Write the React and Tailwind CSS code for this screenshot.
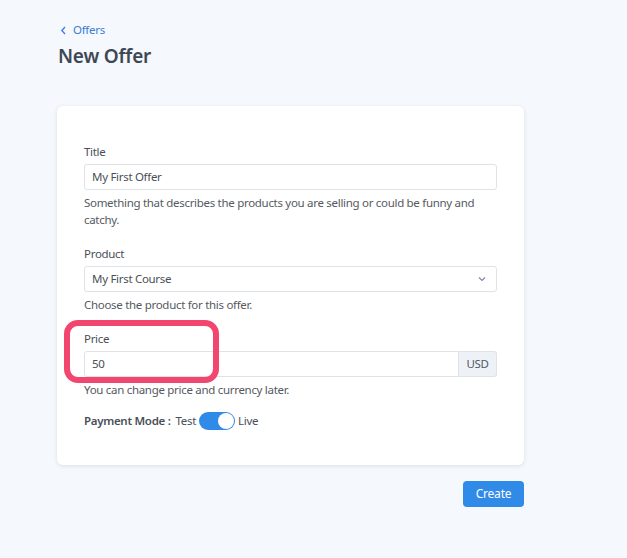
import React from "react";

export default function App() {
  return (
    <div className="relative w-[627px] h-[558px] bg-[#f5f8fc] text-[#4a4f57] overflow-hidden" style={{ fontFamily: '"Noto Sans", "Open Sans", sans-serif' }}>
      <div className="pl-[58px] pt-[21px] w-[524px]">
        <a href="#" className="flex items-center gap-[6px] pl-[2px] text-[11.5px] tracking-[-0.3px] leading-[18px] text-[#3b7dd8]">
          <svg width="7" height="9" viewBox="0 0 7 9" fill="none" stroke="currentColor" strokeWidth="1.3">
            <path d="M5 1 L1.8 4.5 L5 8" />
          </svg>
          Offers
        </a>
        <h1 className="mt-[4px] text-[19px] tracking-[-0.2px] leading-[26px] font-semibold text-[#3e4756]">New Offer</h1>

        <div className="mt-[37px] ml-[-1px] bg-white rounded-[6px] shadow-[0_1px_4px_rgba(30,50,90,0.12)] px-[27px] pt-[37px] pb-[35px] text-[11.5px] tracking-[-0.3px]">
          <div>
            <label className="block leading-[18px] text-[#4a4f57]">Title</label>
            <div className="mt-[3px] h-[26px] border border-[#dfe3e8] rounded-[3px] px-[7px] flex items-center text-[#4a4f57]">My First Offer</div>
            <p className="mt-[4px] leading-[17px] text-[#555a61]">Something that describes the products you are selling or could be funny and catchy.</p>
          </div>

          <div className="mt-[17px]">
            <label className="block leading-[18px]">Product</label>
            <div className="mt-[3px] h-[26px] border border-[#dfe3e8] rounded-[3px] pl-[7px] pr-[10px] flex items-center justify-between">
              <span>My First Course</span>
              <svg width="8" height="6" viewBox="0 0 8 6" fill="none" stroke="#7d8aa3" strokeWidth="1.2">
                <path d="M1 1.5 L4 4.5 L7 1.5" />
              </svg>
            </div>
            <p className="mt-[4px] leading-[17px] text-[#555a61]">Choose the product for this offer.</p>
          </div>

          <div className="mt-[17px]">
            <label className="block leading-[18px]">Price</label>
            <div className="mt-[3px] flex h-[26px]">
              <div className="flex-1 border border-[#dfe3e8] rounded-l-[3px] px-[7px] flex items-center">50</div>
              <div className="w-[38px] border border-l-0 border-[#dfe3e8] bg-[#eef2f7] rounded-r-[3px] flex items-center justify-center text-[#4f5866]">USD</div>
            </div>
            <p className="mt-[4px] leading-[17px] text-[#555a61]">You can change price and currency later.</p>
          </div>

          <div className="mt-[14px] flex items-center h-[18px]">
            <span className="font-semibold text-[#4a4f57]">Payment Mode :</span>
            <span className="ml-[5px]">Test</span>
            <div className="ml-[3px] w-[36px] h-[18px] rounded-full bg-[#2f8ae8] relative">
              <div className="absolute right-[1px] top-[1px] w-[16px] h-[16px] rounded-full bg-white"></div>
            </div>
            <span className="ml-[3px]">Live</span>
          </div>
        </div>

        <div className="flex justify-end mt-[16px]">
          <button className="w-[61px] h-[26px] rounded-[4px] bg-[#2f8ae8] text-white text-[12px] tracking-[-0.2px]">Create</button>
        </div>
      </div>

      <div className="absolute left-[64px] top-[320px] w-[155px] h-[63px] rounded-[14px] border-[6px] border-[#f2466f]"></div>
    </div>
  );
}
